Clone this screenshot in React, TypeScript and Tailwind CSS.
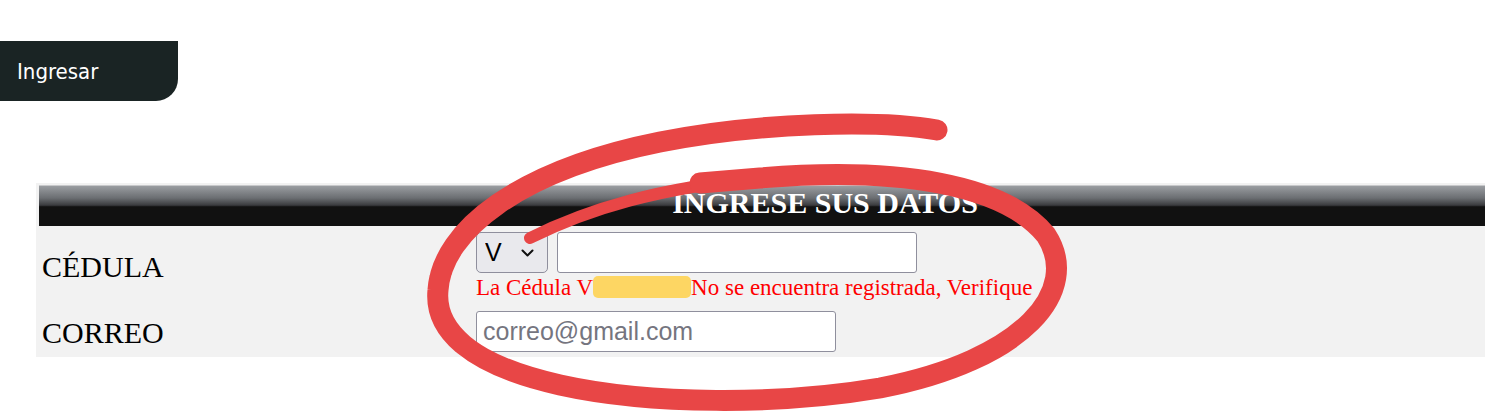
const serif = "font-['Liberation_Serif','Times_New_Roman',serif]";
const sans = "font-['Liberation_Sans',Arial,sans-serif]";

function Annotation() {
  // hand-drawn red loop over the form
  return (
    <svg
      className="pointer-events-none absolute left-0 top-0"
      width={1485}
      height={413}
      viewBox="0 0 1485 413"
      fill="none"
    >
      <path
        d="M530 238 C590 208 660 188 760 178"
        stroke="#e84646"
        strokeWidth={12}
        strokeLinecap="round"
      />
      <path
        d="M700 183 C 760 178 760 178 760 178 C900 166 1005 185 1046 235 C1082 290 1025 360 880 388 C780 405 650 405 560 385 C470 365 434 330 438 290 C442 230 520 170 660 142 C760 122 880 120 937 130"
        stroke="#e84646"
        strokeWidth={21}
        strokeLinecap="round"
        strokeLinejoin="round"
      />
    </svg>
  );
}

export default function App() {
  return (
    <div className="relative h-[413px] w-full overflow-hidden bg-white">
      <div className="pt-[41px]">
        <div
          className={`flex h-[60px] w-[178px] items-center rounded-br-[22px] bg-[#1a2424] pl-[17px] text-[22px] text-white font-['DejaVu_Sans_Condensed','Liberation_Sans',sans-serif]`}
        >
          Ingresar
        </div>
      </div>

      <div className="ml-[36px] mt-[82px] bg-[#f2f2f2] pl-[3px] pt-[2px]">
        <div
          className={`flex h-[41px] items-center justify-center border-t border-[#c8c9cb] bg-[linear-gradient(to_bottom,#9a9da1_0%,#6b6e72_30%,#3a3b3e_48%,#111111_52%,#111111_100%)] pb-[8px] pl-[126px] text-[30px] font-bold text-white ${serif}`}
        >
          INGRESE SUS DATOS
        </div>

        <div className="grid grid-cols-[437px_1fr]">
          <div className={`flex items-center pl-[3px] text-[30px] text-black ${serif}`}>
            CÉDULA
          </div>
          <div className="pb-[7px] pt-[6px]">
            <div className="flex gap-[9px]">
              <div className="relative h-[41px] w-[72px]">
                <select
                  defaultValue="V"
                  className={`h-full w-full appearance-none rounded-[5px] border border-[#8f8f9d] bg-[#e9e9ed] pl-[8px] text-[25px] text-black ${sans}`}
                >
                  <option value="V">V</option>
                  <option value="E">E</option>
                </select>
                <svg
                  className="pointer-events-none absolute left-[45px] top-[17px]"
                  width={13}
                  height={8}
                  viewBox="0 0 13 8"
                  fill="none"
                >
                  <path d="M1.5 1.5 L6.5 6.5 L11.5 1.5" stroke="#111" strokeWidth={2} strokeLinecap="round" strokeLinejoin="round" />
                </svg>
              </div>
              <input
                className={`h-[41px] w-[360px] rounded-[3px] border border-[#8f8f9d] bg-white px-[6px] text-[25px] outline-none ${sans}`}
              />
            </div>
            <p className={`text-[23px] leading-[25px] text-[#ff0000] ${serif}`}>
              La Cédula V
              <span className="inline-block h-[22px] w-[98px] translate-y-[3px] rounded-[5px] bg-[#fdd663] align-baseline" />
              No se encuentra registrada, Verifique
            </p>
          </div>

          <div className={`flex items-center pl-[3px] text-[30px] text-black ${serif}`}>
            CORREO
          </div>
          <div className="pb-[5px] pt-[4px]">
            <input
              placeholder="correo@gmail.com"
              className={`h-[41px] w-[360px] rounded-[3px] border border-[#8f8f9d] bg-white px-[6px] text-[25px] outline-none placeholder:text-[#75757f] ${sans}`}
            />
          </div>
        </div>
      </div>

      <Annotation />
    </div>
  );
}
